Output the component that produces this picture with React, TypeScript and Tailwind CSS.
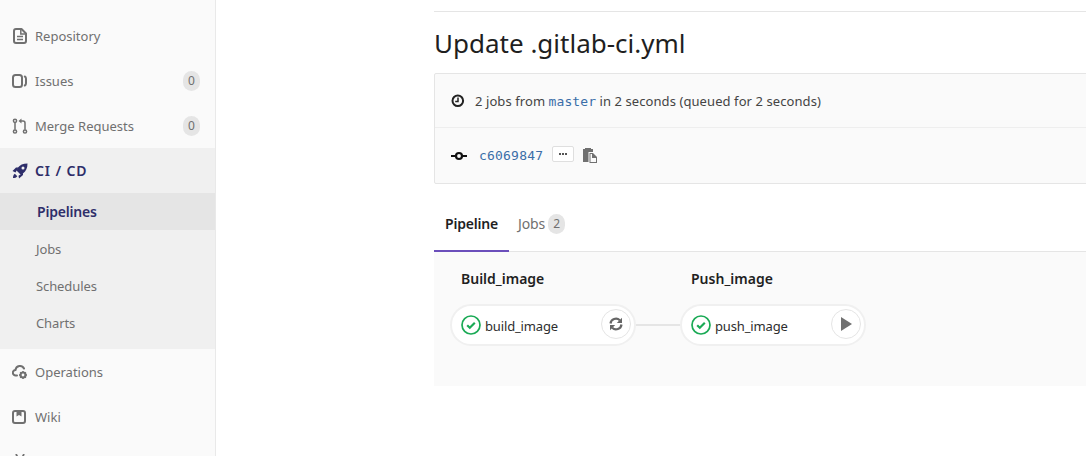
import React from 'react';

const font = { fontFamily: '"Noto Sans", sans-serif' };
const mono = { fontFamily: '"DejaVu Sans Mono", monospace' };

const FileIcon = () => (
  <svg width="16" height="16" viewBox="0 0 16 16" fill="none" stroke="currentColor" strokeWidth="2">
    <path d="M4 1h5.500l4.500 4.500V13a2 2 0 0 1-2 2H4a2 2 0 0 1-2-2V3a2 2 0 0 1 2-2z" strokeLinejoin="round" />
    <path d="M5 8.500h6M5 11.500h6" strokeWidth="1.400" />
    <path d="M8.800 1.500v4.500h4.700" strokeWidth="1.500" />
  </svg>
);

const IssuesIcon = () => (
  <svg width="16" height="16" viewBox="0 0 16 16" fill="none" stroke="currentColor" strokeWidth="2">
    <rect x="1" y="2" width="9" height="12" rx="2.500" />
    <path d="M12.800 3.500c.9.400 1.200 1.200 1.200 2.200v4.600c0 1-.3 1.800-1.200 2.200" strokeLinecap="round" />
  </svg>
);

const MergeIcon = () => (
  <svg width="16" height="16" viewBox="0 0 16 16" fill="none" stroke="currentColor" strokeWidth="1.500">
    <circle cx="3" cy="2.800" r="1.600" />
    <circle cx="3" cy="13.500" r="1.600" />
    <circle cx="13" cy="13.500" r="1.600" />
    <path d="M3 4.500v7.200M13 11.800V5a2 2 0 0 0-2-2H8.500" />
    <path d="M9.500 .6v4.800L6.500 3z" fill="currentColor" stroke="none" />
  </svg>
);

const RocketIcon = () => (
  <svg width="16" height="16" viewBox="0 0 16 16" fill="currentColor">
    <path d="M15.500 .5c-4.500 0-7.700 1.500-9.700 4.300L4.500 7.500l4 4 2.700-1.300C14 8.200 15.500 5 15.500 .5zM11 6.500a1.500 1.500 0 1 1 0-3 1.500 1.500 0 0 1 0 3z" />
    <path d="M.5 8 4 4.500h2.500L3.500 9.500zM7 15.500l4-3.500V9.800L6.500 12.700z" />
    <path d="M1 15c0-2 .5-3.500 1.800-4.300l2.500 2.500C4.500 14.500 3 15 1 15z" />
  </svg>
);

const OpsIcon = () => (
  <svg width="16" height="16" viewBox="0 0 16 16" fill="none" stroke="currentColor" strokeWidth="2">
    <path d="M5 11.500H3.800a2.800 2.800 0 0 1-.3-5.600 4.500 4.500 0 0 1 8.500-1.400" strokeLinecap="round" />
    <circle cx="11" cy="11" r="2.500" strokeWidth="2.200" />
    <path d="M11 7v1.500M11 13.500V15M7 11h1.500M13.500 11H15M8.200 8.200l1 1M12.800 12.800l1 1M13.800 8.200l-1 1M9.200 12.800l-1 1" strokeWidth="1.500" />
  </svg>
);

const BookIcon = () => (
  <svg width="14" height="14" viewBox="0 0 14 14" fill="none" stroke="currentColor" strokeWidth="2">
    <rect x="1" y="1" width="12" height="12" rx="2" />
    <path d="M4.500 1h5v5.500L7 5 4.500 6.500z" fill="currentColor" stroke="none" />
  </svg>
);

const ScissorsIcon = () => (
  <svg width="16" height="16" viewBox="0 0 16 16" fill="none" stroke="currentColor" strokeWidth="1.800">
    <path d="M4 0l4 8M12 0 8 8" />
    <circle cx="4" cy="12" r="2.500" />
    <circle cx="12" cy="12" r="2.500" />
  </svg>
);

const ClockIcon = () => (
  <svg width="14" height="14" viewBox="0 0 14 14" fill="none" stroke="#222">
    <circle cx="6.800" cy="6.800" r="5.300" strokeWidth="2" />
    <path d="M7 3.500V7.500H4.200" strokeWidth="1.500" />
  </svg>
);

const CommitIcon = () => (
  <svg width="16" height="10" viewBox="0 0 16 10" fill="none" stroke="#111" strokeWidth="2.200">
    <circle cx="8" cy="5" r="3" />
    <path d="M0 5h5M11 5h5" />
  </svg>
);

const CopyIcon = () => (
  <svg width="14" height="15" viewBox="0 0 14 15">
    <path d="M0 1h2V0h6v1h2v3H5.500v10H0z" fill="#707070" />
    <path d="M6.500 5h3.500l4 4v6H6.500z" fill="#707070" />
    <path d="M7.500 6H9v4h4v4H7.500z" fill="#fafafa" />
  </svg>
);

const CheckIcon = () => (
  <svg width="20" height="20" viewBox="0 0 20 20" fill="none" stroke="#1aaa55">
    <circle cx="10" cy="10" r="9" strokeWidth="1.700" />
    <path d="M6.200 10.300 8.800 12.800 13.800 7.800" strokeWidth="2.200" />
  </svg>
);

const RetryIcon = () => (
  <svg width="14" height="14" viewBox="0 0 14 14" fill="none" stroke="#666" strokeWidth="2.200">
    <path d="M1.500 6.500A5.500 5.500 0 0 1 10.800 3.200" />
    <path d="M12.500 7.500A5.500 5.500 0 0 1 3.200 10.800" />
    <path d="M13 .8V6H7.800z" fill="#666" stroke="none" />
    <path d="M1 13.200V8h5.200z" fill="#666" stroke="none" />
  </svg>
);

const PlayIcon = () => (
  <svg width="12" height="14" viewBox="0 0 12 14" fill="#707070">
    <path d="M1 0l11 7-11 7z" />
  </svg>
);

const NavItem = ({ icon, label, count }: { icon: React.ReactNode; label?: string; count?: number }) => (
  <div className="h-[45px] flex items-center pl-[12px] pr-[15px] text-[#707070]">
    <span className="w-[23px] flex shrink-0">{icon}</span>
    <span className="text-[13px] flex-1 mt-[2px]">{label}</span>
    {count !== undefined && (
      <span className="w-[17px] h-[20px] rounded-[9px] bg-[#e5e5e5] text-[12px] flex items-center justify-center">
        {count}
      </span>
    )}
  </div>
);

const Sidebar = () => (
  <aside className="w-[216px] shrink-0 h-[456px] bg-[#fafafa] border-r border-[#e9e9e9] pt-[13px] overflow-hidden">
    <NavItem icon={<FileIcon />} label="Repository" />
    <NavItem icon={<IssuesIcon />} label="Issues" count={0} />
    <NavItem icon={<MergeIcon />} label="Merge Requests" count={0} />
    <div className="bg-[#f0f0f0] pb-[7px]">
      <div className="h-[45px] flex items-center pl-[12px] text-[#2e2e6a]">
        <span className="w-[23px] flex">
          <RocketIcon />
        </span>
        <span className="text-[14px] font-semibold tracking-[0.9px]">CI / CD</span>
      </div>
      <div className="h-[37px] bg-[#e5e5e5] flex items-center pl-[37px] text-[14px] font-semibold text-[#2e2e6a] tracking-[-0.2px] mb-[1px]">
        Pipelines
      </div>
      {['Jobs', 'Schedules', 'Charts'].map((s) => (
        <div key={s} className="h-[37px] flex items-center pl-[36px] text-[13px] tracking-[-0.1px] text-[#707070]">
          {s}
        </div>
      ))}
    </div>
    <NavItem icon={<OpsIcon />} label="Operations" />
    <NavItem icon={<BookIcon />} label="Wiki" />
    <NavItem icon={<ScissorsIcon />} />
  </aside>
);

const JobPill = ({ name, action }: { name: string; action: React.ReactNode }) => (
  <div className="w-[186px] h-[42px] rounded-[21px] bg-white border-2 border-[#f0f0f0] flex items-center pl-[9px] pr-[3px] shrink-0">
    <CheckIcon />
    <span className="ml-[4px] flex-1 text-[13px] tracking-[-0.15px] text-[#2e2e2e] mt-[3px]">{name}</span>
    <span className="w-[30px] h-[30px] rounded-full border border-[#e5e5e5] bg-white flex items-center justify-center -mt-[2px]">
      {action}
    </span>
  </div>
);

const App = () => (
  <div className="w-[1086px] h-[456px] overflow-hidden bg-white flex" style={font}>
    <Sidebar />
    <main className="flex-1 min-w-0 pl-[218px] overflow-hidden">
      <div className="w-[700px] mt-[11px] border-t border-[#e5e5e5] pt-[12px]">
        <h1 className="text-[26px] leading-[38px] text-[#1f1f1f] font-normal m-0">Update .gitlab-ci.yml</h1>
      </div>
      <div className="w-[700px] h-[111px] mt-[11px] bg-[#fafafa] border border-[#e5e5e5] rounded-l-[2px] text-[#2e2e2e]">
        <div className="h-[54px] border-b border-[#eeeeee] flex items-center pl-[16px] text-[13px] tracking-[0.08px] text-[#444]">
          <ClockIcon />
          <span className="ml-[10px] mt-[2px]">
            2 jobs from{' '}
            <span className="text-[#3b6ea8] text-[13px]" style={mono}>
              master
            </span>{' '}
            in 2 seconds (queued for 2 seconds)
          </span>
        </div>
        <div className="h-[55px] flex items-center pl-[16px]">
          <CommitIcon />
          <span className="ml-[12px] text-[#3b6ea8] text-[13px] tracking-[0.2px]" style={mono}>
            c6069847
          </span>
          <span className="ml-[9px] w-[22px] h-[16px] border border-[#dfdfdf] rounded-[2px] bg-white flex items-center justify-center gap-[1px] -mt-[3px]">
            <i className="w-[2px] h-[2px] bg-[#555]" />
            <i className="w-[2px] h-[2px] bg-[#555]" />
            <i className="w-[2px] h-[2px] bg-[#555]" />
          </span>
          <span className="ml-[9px] flex">
            <CopyIcon />
          </span>
        </div>
      </div>
      <div className="w-[700px] h-[68px] border-b border-[#e5e5e5] flex">
        <div className="w-[75px] flex items-center justify-center border-b-2 border-[#6b4fbb] h-[68px] pt-[12px] text-[14px] font-semibold text-[#1f1f1f] tracking-[-0.2px]">
          Pipeline
        </div>
        <div className="flex items-center ml-[9px] pt-[12px] text-[14px] tracking-[-0.1px] text-[#707070]">
          Jobs
          <span className="ml-[3px] w-[17px] h-[20px] rounded-[9px] bg-[#e5e5e5] text-[12px] flex items-center justify-center">
            2
          </span>
        </div>
      </div>
      <div className="w-[700px] h-[134px] bg-[#fafafa] pl-[16px] pt-[17px]">
        <div className="flex text-[14px] font-semibold text-[#1f1f1f] leading-[20px]">
          <span className="ml-[11px] w-[230px]">Build_image</span>
          <span>Push_image</span>
        </div>
        <div className="flex items-center mt-[15px]">
          <JobPill name="build_image" action={<RetryIcon />} />
          <div className="w-[44px] h-[2px] bg-[#e5e5e5] -mt-[1px]" />
          <JobPill name="push_image" action={<PlayIcon />} />
        </div>
      </div>
    </main>
  </div>
);

export default App;
